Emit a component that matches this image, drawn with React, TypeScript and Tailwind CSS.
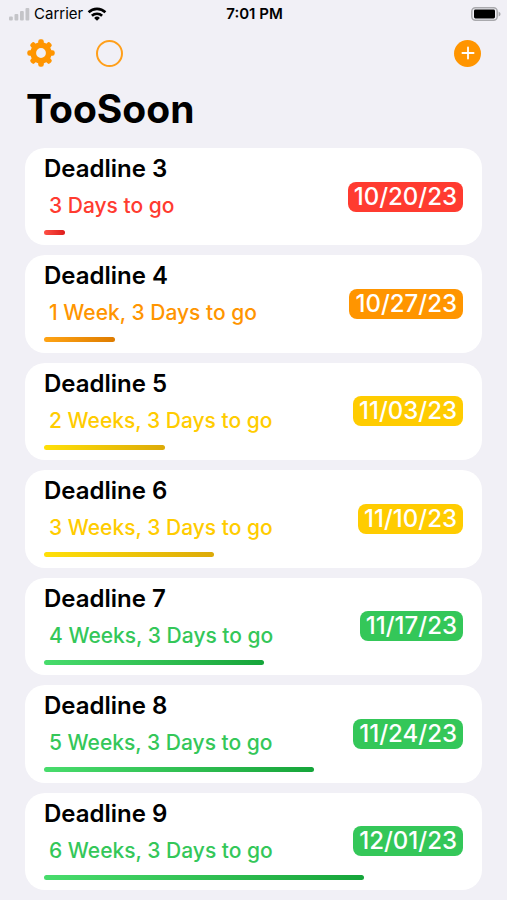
import clsx from "clsx";

interface Deadline {
  name: string;
  daysLeft: number;
  date: string;
}

type Urgency = "red" | "orange" | "yellow" | "green";

// A full bar stands for this many days
const MAX_DAYS = 59;

const deadlines: Deadline[] = [
  { name: "Deadline 3", daysLeft: 3, date: "10/20/23" },
  { name: "Deadline 4", daysLeft: 10, date: "10/27/23" },
  { name: "Deadline 5", daysLeft: 17, date: "11/03/23" },
  { name: "Deadline 6", daysLeft: 24, date: "11/10/23" },
  { name: "Deadline 7", daysLeft: 31, date: "11/17/23" },
  { name: "Deadline 8", daysLeft: 38, date: "11/24/23" },
  { name: "Deadline 9", daysLeft: 45, date: "12/01/23" },
];

const styles: Record<Urgency, { text: string; badge: string; bar: string }> = {
  red: {
    text: "text-[#ff3b30]",
    badge: "bg-[#ff3b30]",
    bar: "from-[#ff4f45] to-[#dd1a1a]",
  },
  orange: {
    text: "text-[#ff9500]",
    badge: "bg-[#ff9500]",
    bar: "from-[#ffa414] to-[#de7c00]",
  },
  yellow: {
    text: "text-[#ffcc00]",
    badge: "bg-[#ffcc00]",
    bar: "from-[#ffe008] to-[#dcaa08]",
  },
  green: {
    text: "text-[#34c759]",
    badge: "bg-[#34c759]",
    bar: "from-[#48dc6c] to-[#15a53a]",
  },
};

function getUrgency(days: number): Urgency {
  if (days < 7) return "red";
  if (days < 14) return "orange";
  if (days < 28) return "yellow";
  return "green";
}

function formatRemaining(days: number) {
  const weeks = Math.floor(days / 7);
  const rest = `${days % 7} Days to go`;
  if (weeks === 0) return rest;
  return `${weeks} ${weeks === 1 ? "Week" : "Weeks"}, ${rest}`;
}

function GearIcon() {
  const teeth = [0, 45, 90, 135, 180, 225, 270, 315];
  return (
    <svg viewBox="0 0 28 28" className="size-7" fill="currentColor" aria-hidden="true">
      <circle cx="14" cy="14" r="7.8" fill="none" stroke="currentColor" strokeWidth="5.8" />
      {teeth.map((angle) => (
        <rect
          key={angle}
          x="11.2"
          y="0.3"
          width="5.6"
          height="7"
          rx="2.2"
          transform={`rotate(${angle} 14 14)`}
        />
      ))}
    </svg>
  );
}

function StatusBar() {
  return (
    <div className="grid grid-cols-3 items-center h-7 pl-2 pr-1.5 text-[15px] text-black">
      <div className="flex items-center gap-1">
        <svg viewBox="0 0 22 14" className="w-[22px] h-3.5 text-[#c4c4c8]" fill="currentColor" aria-hidden="true">
          <rect x="1" y="9.5" width="3.8" height="4" rx="1" />
          <rect x="6.5" y="7" width="3.8" height="6.5" rx="1" />
          <rect x="12" y="4" width="3.8" height="9.5" rx="1" />
          <rect x="17.5" y="1" width="3.8" height="12.5" rx="1" />
        </svg>
        <span>Carrier</span>
        <svg viewBox="0 0 20 14" className="w-5 h-3.5" fill="none" stroke="currentColor" strokeWidth="2.6" aria-hidden="true">
          <path d="M1.6 5.3 a12 12 0 0 1 16.8 0" />
          <path d="M4.9 8.8 a7.3 7.3 0 0 1 10.2 0" />
          <path d="M10 13.8 L7.1 10.9 a4.1 4.1 0 0 1 5.8 0 Z" fill="currentColor" stroke="none" />
        </svg>
      </div>
      <span className="text-center font-semibold">7:01 PM</span>
      <svg viewBox="0 0 30 14" className="w-[30px] h-3.5 justify-self-end" aria-hidden="true">
        <rect x="0.8" y="0.8" width="25.4" height="12.4" rx="3.6" fill="none" stroke="#a9a9ad" strokeWidth="1.5" />
        <rect x="3" y="2.6" width="21" height="8.8" rx="1.4" fill="#000" />
        <path d="M27.6 4.4 Q29.6 5.4 29.6 7 Q29.6 8.6 27.6 9.6 Z" fill="#a9a9ad" />
      </svg>
    </div>
  );
}

function DeadlineCard({ name, daysLeft, date }: Deadline) {
  const style = styles[getUrgency(daysLeft)];

  return (
    <li className="bg-white rounded-[20px] px-[19px] pt-[5px] pb-2">
      <div className="flex items-center justify-between">
        <div>
          <h2 className="text-2xl leading-8 font-semibold text-black">{name}</h2>
          <p className={clsx("pl-[5px] mt-[5px] text-[21px] leading-8 font-medium", style.text)}>
            {formatRemaining(daysLeft)}
          </p>
        </div>
        <time
          className={clsx(
            "mt-[18px] px-1.5 rounded-lg text-2xl leading-[30px] font-medium text-white",
            style.badge
          )}
        >
          {date}
        </time>
      </div>
      <div
        className={clsx("mt-2 h-[5px] rounded-full bg-linear-to-r", style.bar)}
        style={{ width: `${(daysLeft / MAX_DAYS) * 100}%` }}
      />
    </li>
  );
}

export default function App() {
  return (
    <div className="flex flex-col min-h-screen bg-[#f1f0f6] font-['Inter',sans-serif]">
      <StatusBar />

      {/* Toolbar */}
      <header className="px-[26px]">
        <div className="flex items-center pt-2.5">
          <button type="button" aria-label="Settings" className="p-px text-[#ff9500]">
            <GearIcon />
          </button>
          <button
            type="button"
            aria-label="Show completed"
            className="ml-10 size-[27px] rounded-full border-2 border-[#ff9f1a]"
          />
          <button
            type="button"
            aria-label="Add deadline"
            className="ml-auto flex items-center justify-center size-[27px] rounded-full bg-[#ff9500] text-white"
          >
            <svg viewBox="0 0 14 14" className="size-3.5" stroke="currentColor" strokeWidth="1.8" strokeLinecap="round" aria-hidden="true">
              <path d="M7 1.4 V12.6 M1.4 7 H12.6" />
            </svg>
          </button>
        </div>
        <h1 className="mt-[15px] text-[39px] leading-[52px] font-bold text-black">TooSoon</h1>
      </header>

      {/* Deadlines */}
      <ul className="grid grow auto-rows-fr gap-2.5 px-[25px] pt-[13px] pb-2.5">
        {deadlines.map((deadline) => (
          <DeadlineCard key={deadline.name} {...deadline} />
        ))}
      </ul>
    </div>
  );
}
